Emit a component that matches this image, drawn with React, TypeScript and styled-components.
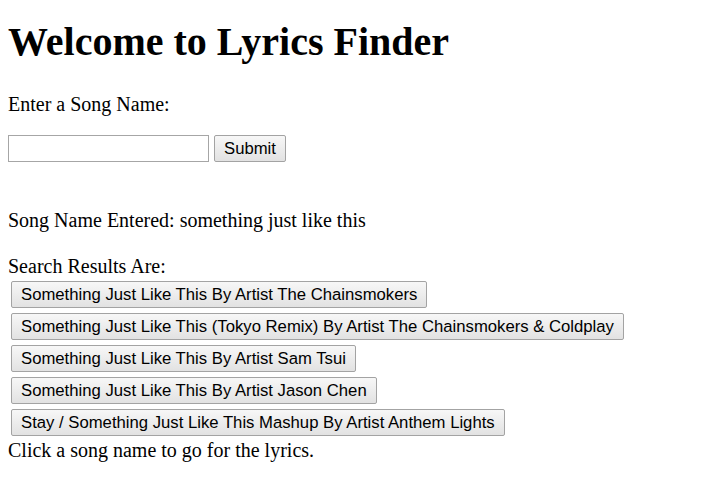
import { useState } from "react";
import styled, { createGlobalStyle } from "styled-components";

const GlobalStyle = createGlobalStyle`
    body {
        margin: 8px;
        background: #ffffff;
        color: #000000;
        font-family: "Liberation Serif", "Times New Roman", serif;
        font-size: 20px;
    }
`

const Wrapper = styled.div`
    display: flow-root;
`

const Title = styled.h1`
    margin: 11px 0 28px;
    font-size: 40px;
    line-height: 46px;
    font-weight: bold;
`

const Text = styled.p<{ top: number }>`
    margin: ${props => props.top}px 0 0;
    font-size: 20px;
    line-height: 23px;
`

const SearchForm = styled.form`
    display: flex;
    align-items: center;
    gap: 5px;
    margin-top: 19px;
`

const SongInput = styled.input`
    box-sizing: border-box;
    width: 201px;
    height: 27px;
    margin: 0;
    padding: 2px 4px;
    border: 1px solid #a6a6a6;
    font-family: "Liberation Sans", Arial, sans-serif;
    font-size: 16px;
`

const Button = styled.button`
    box-sizing: border-box;
    height: 27px;
    margin: 0;
    padding: 0 9px 1px;
    border: 1px solid #a3a3a3;
    border-radius: 2px;
    background: linear-gradient(#f7f7f7, #e2e2e2);
    color: #000000;
    font-family: "Liberation Sans", Arial, sans-serif;
    font-size: 16.7px;
    line-height: 19px;
    white-space: nowrap;
    cursor: pointer;
`

const ResultList = styled.div`
    display: flex;
    flex-direction: column;
    align-items: flex-start;
    gap: 5px;
    margin-top: 3px;
    padding-left: 3px;
`

const results = [
    "Something Just Like This By Artist The Chainsmokers",
    "Something Just Like This (Tokyo Remix) By Artist The Chainsmokers & Coldplay",
    "Something Just Like This By Artist Sam Tsui",
    "Something Just Like This By Artist Jason Chen",
    "Stay / Something Just Like This Mashup By Artist Anthem Lights",
];

export default function App() {
    const [song, setSong] = useState("");
    const entered = "something just like this";

    return (
        <Wrapper>
            <GlobalStyle />
            <Title>Welcome to Lyrics Finder</Title>
            <Text top={0}>Enter a Song Name:</Text>
            <SearchForm onSubmit={e => e.preventDefault()}>
                <SongInput value={song} onChange={e => setSong(e.target.value)} />
                <Button type="submit">Submit</Button>
            </SearchForm>
            <Text top={47}>Song Name Entered: {entered}</Text>
            <Text top={23}>Search Results Are:</Text>
            <ResultList>
                {results.map(name => <Button key={name}>{name}</Button>)}
            </ResultList>
            <Text top={3}>Click a song name to go for the lyrics.</Text>
        </Wrapper>
    );
}
